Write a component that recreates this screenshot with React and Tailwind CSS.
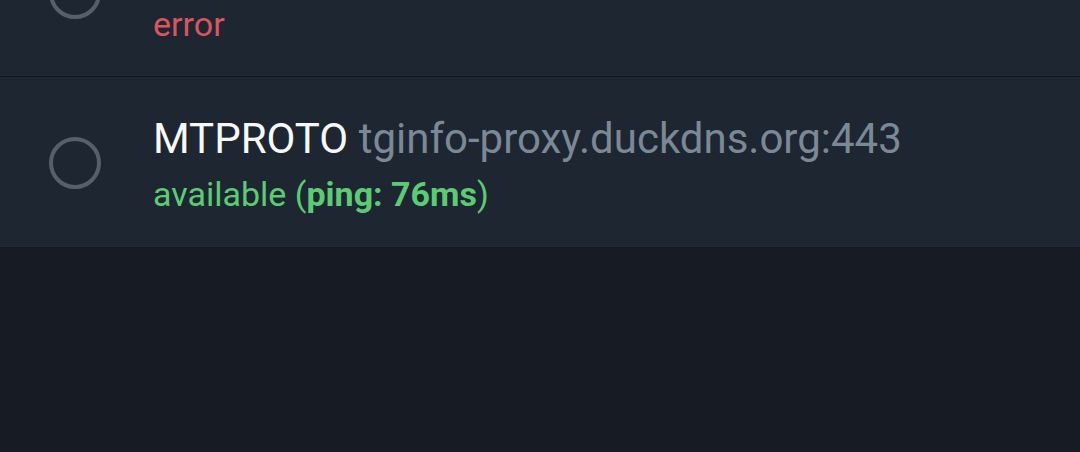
const PROXIES = [
  {
    status: "error",
  },
  {
    type: "MTPROTO",
    host: "tginfo-proxy.duckdns.org:443",
    status: "available",
    ping: 76,
  },
];

const ProxyRow = ({ proxy, first }) => {
  return (
    <div
      className={
        first
          ? "flex items-start h-[169px] -mt-[93px] bg-[#1e2632]"
          : "flex items-start h-[169px] bg-[#1e2632]"
      }
    >
      <div className="pl-[49px] pt-[60px] w-[153px] shrink-0">
        <div className="w-[52px] h-[52px] rounded-full border-[4px] border-[#55606c]" />
      </div>
      <div className="pt-[38px]">
        <div className="h-[48px] text-[42px] leading-[48px] whitespace-nowrap">
          {proxy.type && (
            <>
              <span className="text-[#f7f8f9]">{proxy.type}</span>{" "}
              <span className="text-[#7b8895]">{proxy.host}</span>
            </>
          )}
        </div>
        {proxy.status === "error" ? (
          <div className="mt-[11px] text-[34px] leading-[40px] text-[#d9555f]">
            error
          </div>
        ) : (
          <div className="mt-[11px] text-[34px] leading-[40px] text-[#5ccb74]">
            available (<span className="font-bold">ping: {proxy.ping}ms</span>)
          </div>
        )}
      </div>
    </div>
  );
};

export default function App() {
  return (
    <div
      className="w-[1080px] h-[452px] overflow-hidden bg-[#171c24]"
      style={{ fontFamily: "Roboto, 'Noto Sans', sans-serif" }}
    >
      <ProxyRow proxy={PROXIES[0]} first />
      <div className="h-px bg-[#141921]" />
      <ProxyRow proxy={PROXIES[1]} />
      <div className="h-px bg-[#232b36]" />
    </div>
  );
}
